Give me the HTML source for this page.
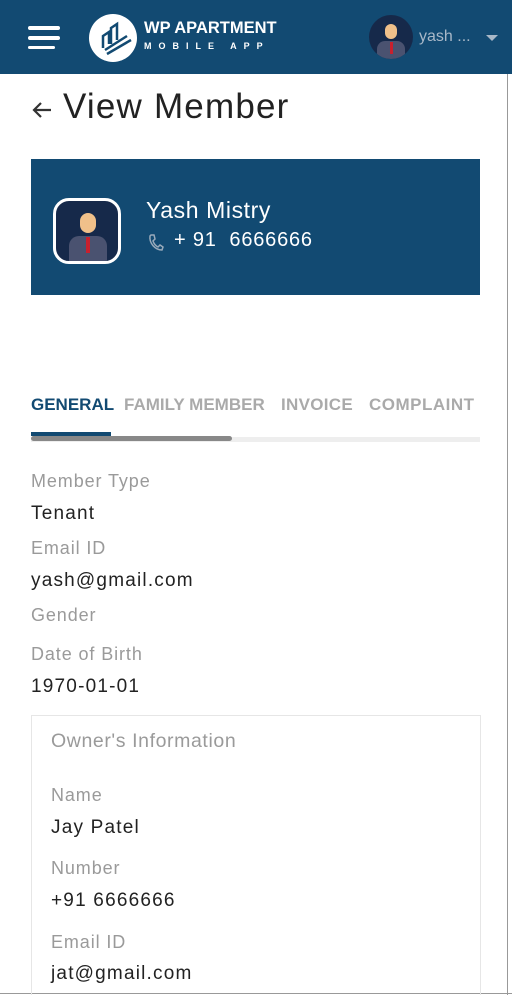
<!DOCTYPE html>
<html><head><meta charset="utf-8"><style>
*{margin:0;padding:0;box-sizing:border-box}
html,body{width:512px;height:995px;overflow:hidden}
body{background:#fff;font-family:"Liberation Sans",sans-serif;position:relative}
.hdr{position:absolute;left:0;top:0;width:512px;height:74px;background:#124a72}
.abs{position:absolute}
.lbl{position:absolute;left:31px;font-size:18px;color:#9a9a9a;letter-spacing:0.9px}
.val{position:absolute;left:31px;font-size:19px;color:#222;letter-spacing:1.2px}
</style></head><body>
<div class="hdr">
 <div class="abs" style="left:28px;top:26px;width:32px;height:4px;background:#fff;border-radius:2px"></div>
 <div class="abs" style="left:28px;top:36px;width:32px;height:4px;background:#fff;border-radius:2px"></div>
 <div class="abs" style="left:28px;top:46px;width:27px;height:3px;background:#fff;border-radius:2px"></div>
 <div class="abs" style="left:89px;top:14px;width:48px;height:48px;border-radius:50%;background:#fff"></div>
 <svg class="abs" style="left:89px;top:14px" width="48" height="48" viewBox="0 0 48 48"><path d="M14 34 L14 22 L20 18 L20 30 M22 30 L22 14 L28 10 L28 26 M16 36 L38 22 M18 40 L42 26" stroke="#124a72" stroke-width="2.5" fill="none"/></svg>
 <div class="abs" style="left:144px;top:19px;color:#fff;font-weight:bold;font-size:16.5px">WP APARTMENT</div>
 <div class="abs" style="left:144px;top:41px;color:#fff;font-weight:bold;font-size:9px;letter-spacing:7px">MOBILE APP</div>
 <div class="abs" style="left:369px;top:15px;width:44px;height:44px;border-radius:50%;background:#16294a;overflow:hidden">
  <div class="abs" style="left:16px;top:9px;width:12px;height:15px;border-radius:6px;background:#f0c08a"></div>
  <div class="abs" style="left:8px;top:26px;width:28px;height:18px;border-radius:8px 8px 0 0;background:#4a5270"></div>
  <div class="abs" style="left:21px;top:27px;width:3px;height:12px;background:#c8202e"></div>
 </div>
 <div class="abs" style="left:419px;top:28px;color:#a8b8c8;font-size:16px">yash ...</div>
 <div class="abs" style="left:486px;top:35px;border-left:6px solid transparent;border-right:6px solid transparent;border-top:6px solid #a8b8c8"></div>
</div>
<div class="abs" style="left:507px;top:74px;width:1px;height:921px;background:#999"></div>
<div class="abs" style="left:0;top:993px;width:512px;height:1px;background:#999"></div>
<svg class="abs" style="left:30px;top:98px" width="24" height="24" viewBox="0 0 24 24"><path d="M21 12H4 M11 5 L4 12 L11 19" stroke="#333" stroke-width="2.2" fill="none"/></svg>
<div class="abs" style="left:63px;top:87px;font-size:35px;color:#222;letter-spacing:1.2px">View Member</div>
<div class="abs" style="left:31px;top:159px;width:449px;height:136px;background:#124a72"></div>
<div class="abs" style="left:53px;top:198px;width:68px;height:66px;border:3px solid #fff;border-radius:16px;background:#16294a;overflow:hidden">
 <div class="abs" style="left:24px;top:12px;width:16px;height:20px;border-radius:8px;background:#f0c08a"></div>
 <div class="abs" style="left:13px;top:35px;width:38px;height:26px;border-radius:10px 10px 0 0;background:#4a5270"></div>
 <div class="abs" style="left:30px;top:36px;width:4px;height:16px;background:#c8202e"></div>
</div>
<div class="abs" style="left:146px;top:197px;color:#fff;font-size:23px;letter-spacing:0.6px">Yash Mistry</div>
<svg class="abs" style="left:148px;top:233px" width="16" height="18" viewBox="0 0 16 18"><path d="M3 2 L6 2 L7 6 L5 8 C6 11 8 13 10 14 L12 12 L15 14 L14 17 C7 17 1 10 2 3 Z" stroke="#9ab" stroke-width="1.5" fill="none"/></svg>
<div class="abs" style="left:174px;top:229px;color:#fff;font-size:20px;letter-spacing:0.8px">+ 91&nbsp;&nbsp;6666666</div>
<div class="abs" style="left:31px;top:395px;font-size:17px;color:#124a72;font-weight:bold">GENERAL</div>
<div class="abs" style="left:124px;top:395px;font-size:17px;color:#aaa;font-weight:bold">FAMILY MEMBER</div>
<div class="abs" style="left:281px;top:395px;font-size:17px;color:#aaa;font-weight:bold;letter-spacing:0.3px">INVOICE</div>
<div class="abs" style="left:369px;top:395px;font-size:17px;color:#aaa;font-weight:bold;letter-spacing:0.5px">COMPLAINT</div>
<div class="abs" style="left:31px;top:437px;width:449px;height:5px;background:#eee"></div>
<div class="abs" style="left:31px;top:432px;width:80px;height:4px;background:#124a72"></div>
<div class="abs" style="left:31px;top:436px;width:201px;height:5px;border-radius:3px;background:#888"></div>
<div class="lbl" style="top:471px">Member Type</div>
<div class="val" style="top:503px">Tenant</div>
<div class="lbl" style="top:538px">Email ID</div>
<div class="val" style="top:570px">yash@gmail.com</div>
<div class="lbl" style="top:605px">Gender</div>
<div class="lbl" style="top:644px">Date of Birth</div>
<div class="val" style="top:676px">1970-01-01</div>
<div class="abs" style="left:31px;top:715px;width:450px;height:300px;border:1px solid #e6e6e6"></div>
<div class="lbl" style="left:51px;top:730px;font-size:19.5px;letter-spacing:0.6px">Owner's Information</div>
<div class="lbl" style="left:51px;top:785px">Name</div>
<div class="val" style="left:51px;top:817px">Jay Patel</div>
<div class="lbl" style="left:51px;top:858px">Number</div>
<div class="val" style="left:51px;top:890px">+91 6666666</div>
<div class="lbl" style="left:51px;top:932px">Email ID</div>
<div class="val" style="left:51px;top:963px">jat@gmail.com</div>
</body></html>
